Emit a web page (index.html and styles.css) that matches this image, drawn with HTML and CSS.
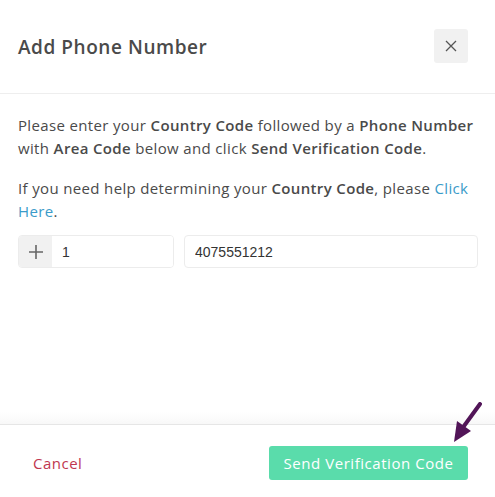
FILE: index.html
```html
<!DOCTYPE html>
<html>
<head>
	<meta charset="utf-8">
	<title>Add Phone Number</title>
	<link rel="stylesheet" href="styles.css">
</head>
<body>
	<div class="modal">
		<div class="modal-header">
			<h1>Add Phone Number</h1>
			<button class="close-btn" type="button">
				<svg width="12" height="12" viewBox="0 0 12 12"><path d="M1 1L11 11M11 1L1 11" stroke="#555" stroke-width="1.3" fill="none"/></svg>
			</button>
		</div>
		<div class="modal-body">
			<p>Please enter your <b>Country Code</b> followed by a <b>Phone Number</b> with <b>Area Code</b> below and click <b>Send Verification Code</b>.</p>
			<p>If you need help determining your <b>Country Code</b>, please <a href="#">Click Here</a>.</p>
			<div class="phone-row">
				<div class="country-group">
					<span class="addon">
						<svg width="14" height="14" viewBox="0 0 14 14"><path d="M7 0V14M0 7H14" stroke="#666" stroke-width="1.6" fill="none"/></svg>
					</span>
					<input type="text" class="country-input" value="1">
				</div>
				<input type="text" class="phone-input" value="4075551212">
			</div>
		</div>
		<div class="modal-footer">
			<a href="#" class="cancel">Cancel</a>
			<button class="send-btn" type="button">Send Verification Code</button>
		</div>
		<!-- pointer arrow -->
		<svg class="arrow" width="40" height="50" viewBox="0 0 40 50">
			<path d="M38 2L22 24" stroke="#521558" stroke-width="4" stroke-linecap="round" fill="none"/>
			<polygon points="12,40 15,19 29,29" fill="#521558"/>
		</svg>
	</div>
</body>
</html>
```

FILE: styles.css
```css
html, body {
	margin: 0;
	padding: 0;
	background-color: #fff;
}
body {
	font-family: "Open Sans", Arial, sans-serif;
	color: #4a4a4a;
}
.modal {
	position: relative;
	height: 497px;
	display: flex;
	flex-direction: column;
}
.modal-header {
	display: flex;
	align-items: center;
	justify-content: space-between;
	height: 93px;
	padding: 0 27px 0 18px;
	border-bottom: 1px solid #eeeeee;
}
.modal-header h1 {
	margin: 0;
	font-size: 19px;
	font-weight: 600;
	color: #4a4a4a;
	letter-spacing: 0.55px;
}
.close-btn {
	width: 34px;
	height: 34px;
	border: none;
	border-radius: 3px;
	background-color: #f1f1f1;
	display: flex;
	align-items: center;
	justify-content: center;
	padding: 0;
	margin-top: -1px;
}
.modal-body {
	flex: 1;
	padding: 20px 14px 0 18px;
	background: linear-gradient(to bottom, #fff calc(100% - 12px), #f8f8f8 100%);
}
.modal-body p {
	margin: 0 0 17px 0;
	font-size: 15px;
	line-height: 23px;
	letter-spacing: 0.35px;
}
.modal-body p:last-of-type {
	margin-bottom: 0;
}
.modal-body b {
	font-weight: 600;
}
.modal-body a {
	color: #3a9bc9;
	text-decoration: none;
}
.phone-row {
	display: flex;
	gap: 10px;
	margin-top: 12px;
	margin-right: 3px;
}
.country-group {
	display: flex;
	width: 156px;
	height: 33px;
	border: 1px solid #ececec;
	border-radius: 4px;
	box-sizing: border-box;
	overflow: hidden;
}
.addon {
	width: 33px;
	background-color: #f1f1f1;
	display: flex;
	align-items: center;
	justify-content: center;
}
.country-input, .phone-input {
	font-family: "Liberation Sans", Arial, sans-serif;
	font-size: 14px;
	color: #333;
	border: none;
	outline: none;
	padding: 0 10px;
	box-sizing: border-box;
}
.country-input {
	flex: 1;
	min-width: 0;
}
.phone-input {
	flex: 1;
	height: 33px;
	border: 1px solid #ececec;
	border-radius: 4px;
}
.modal-footer {
	display: flex;
	align-items: center;
	justify-content: space-between;
	height: 72px;
	padding: 0 27px 0 33px;
	border-top: 1px solid #e6e6e6;
}
.cancel {
	color: #c0374f;
	font-size: 15px;
	letter-spacing: 0.5px;
	text-decoration: none;
	margin-top: 3px;
}
.send-btn {
	width: 199px;
	height: 34px;
	border: none;
	border-radius: 3px;
	background-color: #5adcab;
	color: #fff;
	font-family: "Open Sans", Arial, sans-serif;
	font-size: 15px;
	letter-spacing: 0.55px;
	margin-top: 3px;
}
.arrow {
	position: absolute;
	left: 442px;
	top: 402px;
}
```
